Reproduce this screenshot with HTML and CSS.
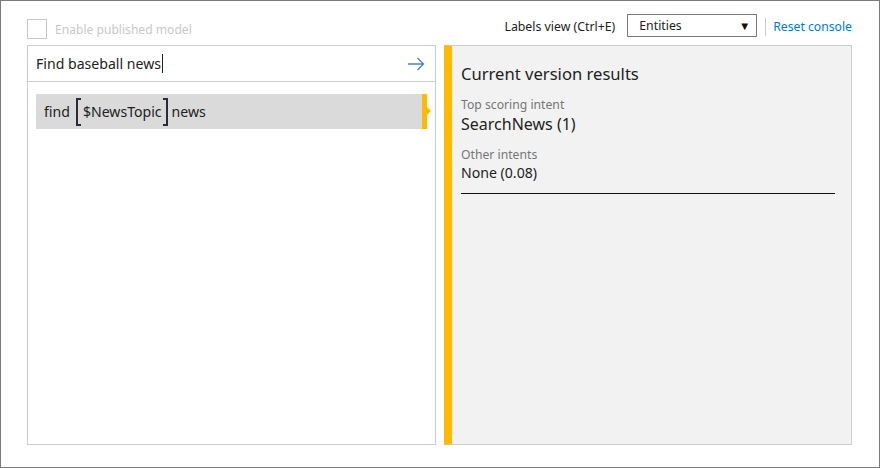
FILE: index.html
```html
<!DOCTYPE html>
<html>
<head>
<meta charset="utf-8">
<link rel="stylesheet" href="styles.css">
</head>
<body>
<div class="frame">
  <div class="toolbar">
    <label class="enable">
      <span class="checkbox"></span>
      <span class="enable-text">Enable published model</span>
    </label>
    <div class="tools">
      <span class="labels-label">Labels view (Ctrl+E)</span>
      <div class="select"><span>Entities</span><span class="caret">▼</span></div>
      <span class="sep"></span>
      <a class="reset">Reset console</a>
    </div>
  </div>
  <div class="main">
    <div class="left">
      <div class="input-row">
        <span class="query">Find baseball news</span><span class="cursor"></span>
        <svg class="send" width="18" height="14" viewBox="0 0 18 14">
          <path d="M1 7 H16.5 M10.5 1 L16.5 7 L10.5 13" fill="none" stroke="#4f7ddc" stroke-width="1.3"/>
        </svg>
      </div>
      <div class="utterance">
        <span class="utt-text">find <span class="entity"><span class="br br-l"></span>$NewsTopic<span class="br br-r"></span></span> news</span>
        <span class="flag"></span>
      </div>
    </div>
    <div class="right">
      <div class="title">Current version results</div>
      <div class="label">Top scoring intent</div>
      <div class="top-intent">SearchNews (1)</div>
      <div class="label other">Other intents</div>
      <div class="value">None (0.08)</div>
      <div class="rule"></div>
    </div>
  </div>
</div>
</body>
</html>
```
FILE: styles.css
```css
* { box-sizing: border-box; }
html, body { margin: 0; padding: 0; background: #fff; }
body { font-family: "Noto Sans", "Open Sans", sans-serif; color: #222; }
.frame {
  width: 880px; height: 468px;
  border: 1px solid #7a7a7a;
  padding: 13px 27px 22px 26px;
  display: flex; flex-direction: column;
}
.toolbar { display: flex; justify-content: space-between; height: 24px; margin-bottom: 7px; }
.enable { display: flex; align-items: center; margin-top: 5px; height: 20px; }
.checkbox { width: 20px; height: 20px; border: 1px solid #c8c8c8; background: #fff; }
.enable-text { margin-left: 8px; font-size: 12.1px; color: #c8c8c8; }
.tools { display: flex; align-items: flex-start; }
.labels-label { font-size: 12.3px; margin-top: 4px; margin-right: 12px; color: #222; }
.select {
  width: 130px; height: 23px; border: 1px solid #7a7a7a; background: #fff;
  display: flex; align-items: center; justify-content: space-between;
  padding: 0 6px 0 11px; font-size: 12.3px;
}
.caret { font-size: 11.5px; color: #111; }
.sep { width: 1px; height: 18px; background: #ccc; margin: 4px 7px 0 8px; }
.reset { font-size: 12.2px; color: #0078d7; margin-top: 4px; }
.main { flex: 1; display: flex; gap: 8px; }
.left { width: 409px; border: 1px solid #cccccc; background: #fff; }
.input-row {
  height: 36px; border-bottom: 1px solid #cccccc;
  display: flex; align-items: center; padding: 0 10px 0 8px;
}
.query { font-size: 14.1px; color: #222; }
.cursor { width: 1px; height: 19px; background: #222; margin-left: 1px; }
.send { margin-left: auto; }
.utterance {
  margin: 12px 8px 0 8px; height: 35px; background: #dadada;
  display: flex; align-items: center; position: relative;
  border-right: 5px solid #ffb900;
}
.utt-text { padding-left: 8px; font-size: 14.1px; display: flex; align-items: center; }
.entity { display: inline-flex; align-items: center; margin: 0 4px 0 6px; }
.br { display: inline-block; width: 5px; height: 28px; border: 2px solid #2a2a3a; }
.br-l { border-right: none; margin-right: 2px; }
.br-r { border-left: none; margin-left: 1px; }
.flag {
  position: absolute; right: -9px; top: 13px;
  width: 0; height: 0;
  border-top: 4px solid transparent; border-bottom: 4px solid transparent;
  border-left: 4px solid #ffb900;
}
.right {
  flex: 1; background: #f2f2f2;
  border: 1px solid #cccccc; border-left: 8px solid #ffb900;
  padding: 16px 16px 0 9px;
}
.title { font-size: 16.6px; color: #222; line-height: 24px; }
.label { font-size: 12.2px; color: #767676; margin-top: 10px; line-height: 17px; }
.top-intent { font-size: 16px; color: #222; line-height: 22px; }
.label.other { margin-top: 11px; }
.value { font-size: 14.1px; color: #222; line-height: 19px; }
.rule { height: 1px; background: #111; margin-top: 11px; }
```
